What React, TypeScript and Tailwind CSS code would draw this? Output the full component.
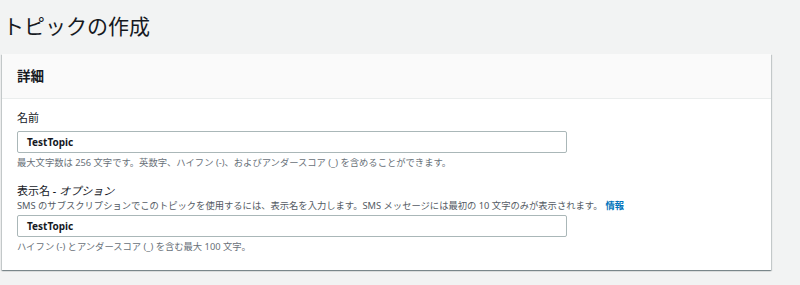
const font = { fontFamily: '"Noto Sans", "Noto Sans CJK JP", sans-serif' }

function Field({
  label,
  optional,
  description,
  value,
  hint,
  first,
}: {
  label: string
  optional?: boolean
  description?: boolean
  value: string
  hint: string
  first?: boolean
}) {
  return (
    <div className={first ? "" : "mt-[14px]"}>
      <div className="text-[11px] leading-[16px] text-[#16191f]">
        {label}
        {optional && <span className="italic"> - オプション</span>}
      </div>
      {description && (
        <div className="text-[9.3px] leading-[12px] text-[#545b64] mt-[1px]">
          SMS のサブスクリプションでこのトピックを使用するには、表示名を入力します。SMS メッセージには最初の 10 文字のみが表示されます。
          <span className="font-bold text-[#0073bb] ml-[3px]">情報</span>
        </div>
      )}
      <div
        className={`${description ? "mt-[3px]" : "mt-[5px]"} w-[550px] h-[22px] border border-[#aab7b8] rounded-[2px] bg-white flex items-center px-[9px]`}
      >
        <span className="text-[10px] font-bold text-[#16191f]">{value}</span>
      </div>
      <div className="text-[9.3px] leading-[12px] text-[#687078] mt-[4px]">{hint}</div>
    </div>
  )
}

export default function App() {
  return (
    <div className="w-[800px] h-[285px] bg-[#f2f3f3] pl-[2px] pt-[12px]" style={font}>
      <h1 className="text-[21px] leading-[28px] font-normal text-[#16191f] pl-[1px]">
        トピックの作成
      </h1>
      <div className="mt-[14px] w-[769px] bg-white shadow-[0_1px_1px_0_rgba(0,28,36,0.3),1px_1px_1px_0_rgba(0,28,36,0.15),-1px_1px_1px_0_rgba(0,28,36,0.15)]">
        <div className="h-[45px] bg-[#fafafa] border-b border-[#eaeded] flex items-center px-[15px]">
          <span className="text-[13.5px] font-bold text-[#16191f]">詳細</span>
        </div>
        <div className="px-[15px] pt-[11px] pb-[17px]">
          <Field
            first
            label="名前"
            value="TestTopic"
            hint="最大文字数は 256 文字です。英数字、ハイフン (-)、およびアンダースコア (_) を含めることができます。"
          />
          <Field
            label="表示名"
            optional
            description
            value="TestTopic"
            hint="ハイフン (-) とアンダースコア (_) を含む最大 100 文字。"
          />
        </div>
      </div>
    </div>
  )
}
